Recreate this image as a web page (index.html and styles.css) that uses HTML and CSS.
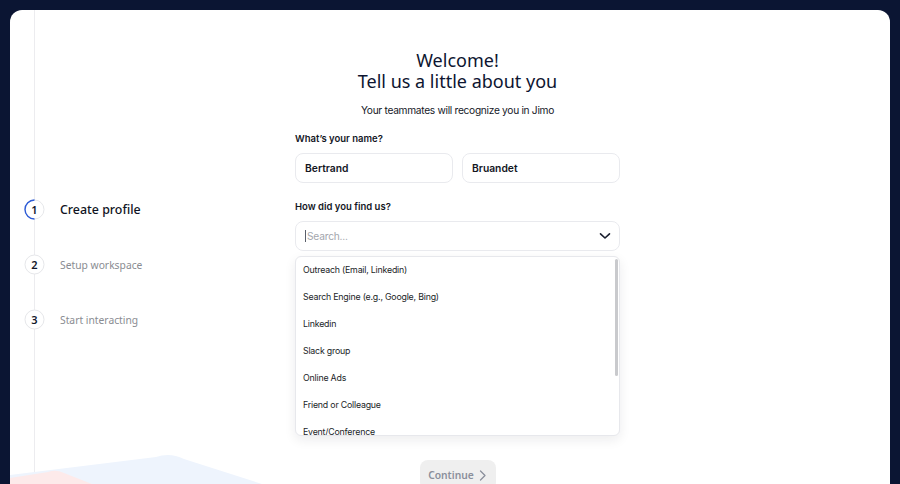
FILE: index.html
```html
<!DOCTYPE html>
<html>
<head>
<meta charset="utf-8">
<link rel="stylesheet" href="styles.css">
</head>
<body>
<div class="card">
  <svg class="decor" width="300" height="44" viewBox="0 0 300 44">
    <path d="M0 35 L146 17 Q160 12 174 19 L252 44 L0 44 Z" fill="#eef4fd"/>
    <path d="M0 38 L38 32 Q46 29 54 33 L82 44 L0 44 Z" fill="#fdeaea"/>
  </svg>
  <aside class="sidebar">
    <ol class="steps">
      <li class="step active">
        <span class="num">
          <svg width="21" height="21" viewBox="0 0 21 21"><circle cx="10.5" cy="10.5" r="9.5" fill="#fff" stroke="#e6e7ea" stroke-width="1"/><path d="M10.5 1 A9.5 9.5 0 0 0 10.5 20" fill="none" stroke="#2c5bd6" stroke-width="1.4"/></svg>
          <b>1</b>
        </span>
        <span class="label">Create profile</span>
      </li>
      <li class="step">
        <span class="num"><svg width="21" height="21" viewBox="0 0 21 21"><circle cx="10.5" cy="10.5" r="9.5" fill="#fff" stroke="#e6e7ea" stroke-width="1"/></svg><b>2</b></span>
        <span class="label">Setup workspace</span>
      </li>
      <li class="step">
        <span class="num"><svg width="21" height="21" viewBox="0 0 21 21"><circle cx="10.5" cy="10.5" r="9.5" fill="#fff" stroke="#e6e7ea" stroke-width="1"/></svg><b>3</b></span>
        <span class="label">Start interacting</span>
      </li>
    </ol>
  </aside>
  <main class="main">
    <h1 class="title"><span>Welcome!</span><span>Tell us a little about you</span></h1>
    <p class="subtitle">Your teammates will recognize you in Jimo</p>
    <div class="field-label">What’s your name?</div>
    <div class="name-row">
      <div class="input">Bertrand</div>
      <div class="input">Bruandet</div>
    </div>
    <div class="field-label second">How did you find us?</div>
    <div class="select-wrap">
      <div class="select">
        <span class="caret"></span><span class="placeholder">Search...</span>
        <svg class="chev" width="12" height="8" viewBox="0 0 12 8"><path d="M1.5 1.8 L6 6 L10.5 1.8" fill="none" stroke="#1a1f2e" stroke-width="1.6" stroke-linecap="round" stroke-linejoin="round"/></svg>
      </div>
      <div class="menu">
        <div class="scroll"></div>
        <div class="opt">Outreach (Email, Linkedin)</div>
        <div class="opt">Search Engine (e.g., Google, Bing)</div>
        <div class="opt">Linkedin</div>
        <div class="opt">Slack group</div>
        <div class="opt">Online Ads</div>
        <div class="opt">Friend or Colleague</div>
        <div class="opt">Event/Conference</div>
      </div>
    </div>
    <div class="actions">
      <button class="continue">Continue <svg width="8" height="11" viewBox="0 0 8 11"><path d="M1.5 1 L6 5.5 L1.5 10" fill="none" stroke="#8b909c" stroke-width="1.3" stroke-linecap="round" stroke-linejoin="round"/></svg></button>
    </div>
  </main>
</div>
</body>
</html>
```
FILE: styles.css
```css
* { box-sizing: border-box; }
html, body { margin: 0; padding: 0; }
body {
  background: #0b1533;
  height: 484px;
  overflow: hidden;
  font-family: Inter, "Liberation Sans", sans-serif;
}
.card {
  margin: 10px 10px 0;
  height: 474px;
  background: #fff;
  border-radius: 12px 12px 0 0;
  display: flex;
  position: relative;
  overflow: hidden;
}
.card::before {
  content: "";
  position: absolute;
  left: 24px;
  top: 0;
  bottom: 0;
  width: 1px;
  background: #ececef;
}
.decor {
  position: absolute;
  left: 0;
  bottom: 0;
}
.sidebar {
  width: 285px;
  flex: none;
  position: relative;
  padding-top: 189px;
  padding-left: 14px;
}
.steps { list-style: none; margin: 0; padding: 0; display: flex; flex-direction: column; gap: 34px; }
.step { display: flex; align-items: center; height: 21px; gap: 15px; }
.num { position: relative; width: 21px; height: 21px; display: flex; align-items: center; justify-content: center; }
.num svg { position: absolute; left: 0; top: 0; }
.num b {
  position: relative;
  font-family: "Noto Sans", "Open Sans", sans-serif;
  font-size: 11px;
  font-weight: 600;
  color: #11162a;
}
.label {
  font-family: "Noto Sans", "Open Sans", sans-serif;
  font-size: 10.3px;
  color: #8a8c92;
}
.step.active .label { font-size: 12.4px; color: #0f1323; font-weight: 500; }
.main {
  width: 325px;
  flex: none;
  padding-top: 40px;
  position: relative;
}
.title {
  margin: 0;
  display: flex;
  flex-direction: column;
  align-items: center;
  font-family: "Noto Sans", "Open Sans", sans-serif;
  font-weight: 400;
  font-size: 18px;
  line-height: 21px;
  color: #0d1530;
}
.subtitle {
  margin: 11px 0 0;
  text-align: center;
  font-size: 10.2px;
  letter-spacing: -0.3px;
  line-height: 14px;
  color: #14171f;
}
.field-label {
  margin-top: 16px;
  font-size: 9.5px;
  line-height: 12px;
  font-weight: 600;
  color: #14171f;
}
.field-label.second { margin-top: 18px; }
.name-row { display: flex; gap: 9px; margin-top: 8px; }
.input {
  flex: 1;
  height: 30px;
  border: 1px solid #e9eaee;
  border-radius: 8px;
  padding-left: 9px;
  display: flex;
  align-items: center;
  font-size: 10.3px;
  font-weight: 600;
  color: #14171f;
}
.select-wrap { position: relative; margin-top: 8px; }
.select {
  height: 30px;
  border: 1px solid #e9eaee;
  border-radius: 8px;
  padding-left: 9px;
  display: flex;
  align-items: center;
  font-size: 10.2px;
  letter-spacing: -0.2px;
  color: #a3a6ad;
}
.caret { width: 1px; height: 12px; background: #5a5f6a; margin-right: 1px; }
.chev { margin-left: auto; margin-right: 8px; }
.menu {
  position: absolute;
  left: 0;
  right: 0;
  top: 35px;
  height: 180px;
  overflow: hidden;
  background: #fff;
  border: 1px solid #e7e8ec;
  border-radius: 6px;
  box-shadow: 0 4px 12px rgba(20, 25, 40, 0.08);
  z-index: 2;
}
.scroll {
  position: absolute;
  right: 1px;
  top: 2px;
  width: 3px;
  height: 117px;
  background: #c9cacd;
  border-radius: 2px;
}
.opt {
  height: 27px;
  display: flex;
  align-items: center;
  padding-left: 7px;
  padding-bottom: 2px;
  font-size: 8.8px;
  letter-spacing: -0.2px;
  color: #1b1e27;
}
.actions { display: flex; justify-content: center; margin-top: 209px; }
.continue {
  width: 76px;
  height: 30px;
  border: none;
  border-radius: 8px;
  background: #efefef;
  display: flex;
  align-items: center;
  justify-content: center;
  gap: 5px;
  font-family: "Noto Sans", "Open Sans", sans-serif;
  font-size: 10.3px;
  font-weight: 600;
  color: #8b909c;
  padding: 0;
}
```
